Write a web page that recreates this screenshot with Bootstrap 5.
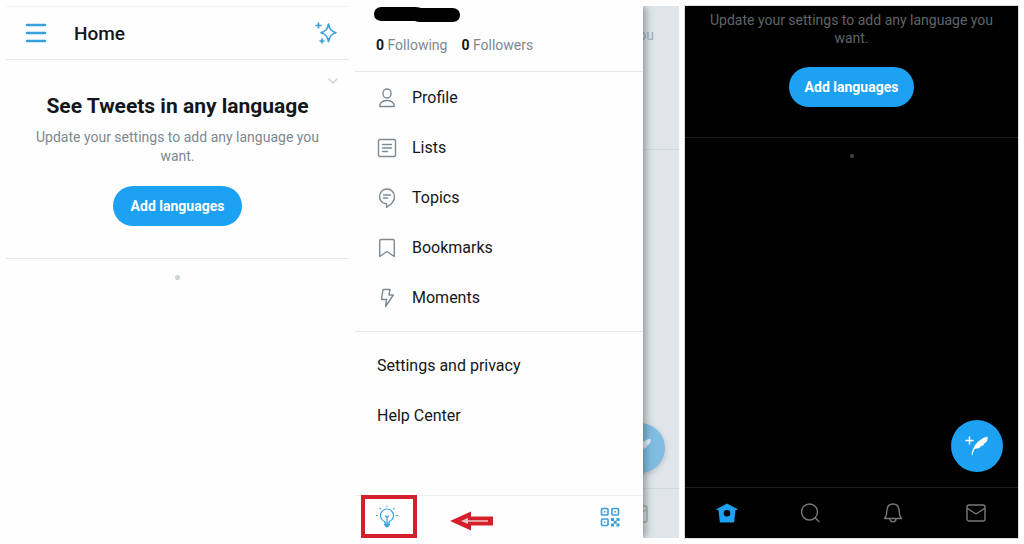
<!DOCTYPE html>
<html lang="en">
<head>
<meta charset="utf-8">
<meta name="viewport" content="width=device-width, initial-scale=1">
<title>Dark mode steps</title>
<link href="https://cdn.jsdelivr.net/npm/bootstrap@5.3.0/dist/css/bootstrap.min.css" rel="stylesheet">
<style>
  :root { --brand: #1da1f2; --ink: #14171a; --muted: #7b8992; --rule: #e3e8ea; }
  body { font-family: Roboto, "Liberation Sans", sans-serif; color: var(--ink); background: #fefefe; }
  svg { display: block; fill: none; stroke: currentColor; stroke-linecap: round; stroke-linejoin: round; }
  .screens { display: grid; grid-template-columns: 343fr 324fr 333fr; gap: 6px; padding: 6px; min-height: 100vh; }
  .icon-btn { padding: 0; border: 0; background: none; color: #379fd9; }
  .rule-b { border-bottom: 1px solid var(--rule); }

  .home-bar { height: 54px; padding: 0 12px 0 19px; border-top: 1px solid #f3f4f5; }
  .home-title { font-size: 19px; line-height: 26px; font-weight: 500; margin: 2px 0 0 27px; }
  .promo { padding: 13px 8px 32px; }
  .promo-close { height: 16px; padding-right: 2px; color: #ccd2d5; }
  .promo-close button { color: inherit; }
  .promo-title { font-size: 21px; line-height: 26px; font-weight: 700; margin: 4px 0 9px; }
  .promo-text { font-size: 14px; line-height: 19px; color: var(--muted); margin: 0 16px 20px; }
  .btn-pill { height: 40px; padding: 0 18px; border: 0; border-radius: 20px; background: var(--brand); color: #fff; font-size: 14px; line-height: 20px; font-weight: 700; }
  .btn-pill:hover { background: #1a91da; color: #fff; }
  .dot { width: 5px; height: 5px; border-radius: 50%; background: #ccd3d7; margin: 16px auto 0; }

  .drawer { flex: 0 0 89%; background: #fefefe; z-index: 1; box-shadow: 2px 0 8px rgba(40,55,65,.5); clip-path: inset(0 -12px 0 0); }
  .drawer-head { height: 66px; padding: 1px 20px 0 19px; }
  .stats { font-size: 14px; line-height: 18px; gap: 14px; margin: 13px 0 0 2px; }
  .stats a { color: var(--muted); text-decoration: none; }
  .stats b { color: var(--ink); }
  .menu-link { height: 50px; padding-left: 22px; gap: 15px; font-size: 16px; line-height: 20px; color: var(--ink); text-decoration: none; }
  .menu-link svg { color: #7b8a94; }
  .menu-main { padding: 1px 0 8px; }
  .menu-more { padding-top: 9px; }
  .drawer-foot { height: 43px; padding: 0 23px 0 6px; box-shadow: inset 0 1px #eceff0; }
  .marked { width: 56px; padding-right: 4px; border: 4px solid #d5202b; }
  .arrow-note { margin: 8px 0 0 33px; }
  .dimmed { background: #dfe5e8; color: #a6afb4; }
  .dimmed-text { height: 144px; padding-top: 19px; border-bottom: 1px solid #d1d9dd; font-size: 14px; line-height: 20px; }
  .dimmed-text span { margin-left: -5px; }
  .dimmed-fab { width: 50px; height: 50px; margin: 0 0 15px -28px; border-radius: 50%; background: #81bde3; box-shadow: 0 2px 5px rgba(60,80,90,.25); color: #e6f0f6; }
  .dimmed-foot { height: 50px; border-top: 1px solid #d1d9dd; }
  .dimmed-foot svg { margin-left: -15px; }

  .dark { background: #000; box-shadow: 0 0 0 1px #d9dddd; }
  .dark .promo { padding: 5px 8px 30px; border-bottom: 1px solid #1c1f21; }
  .dark .promo-text { color: #5f6568; line-height: 18px; margin: 0 8px 20px; }
  .dark .btn-pill { height: 40px; padding: 0 16px; }
  .dark .dot { background: #3d4143; width: 4px; height: 4px; }
  .fab { width: 52px; height: 52px; padding: 0; margin: 0 15px 15px auto; border: 0; border-radius: 50%; background: var(--brand); color: #fff; }
  .tabs { height: 51px; border-top: 1px solid #1c1f21; }
  .tabs a { flex: 1 1 0; color: #76797b; }
  .tabs a.active { color: var(--brand); }
</style>
</head>
<body>
<svg width="0" height="0" class="position-absolute" aria-hidden="true">
  <symbol id="mail" viewBox="0 0 20 20"><rect x="1" y="2" width="18" height="16" rx="2"/><path d="M1.500 5.500 10 11l8.500-5.500"/></symbol>
  <symbol id="feather" viewBox="0 0 24 22"><path d="M4.500 2v7M1 5.500h7" stroke-width="1.500"/><path d="M6.500 20C7.500 13 11.500 4.500 22.500 1.500c.4 2.500-.2 4.500-1.500 5.800-.8.8-1.700 1.200-3 1.400l1.300.6c-1.500 1.700-3 2.300-5 2.500l1.200.8c-1.800 1-3.700.9-5.700 1.400C8.500 16 8 18 7.500 20z" fill="currentColor" stroke="none"/></symbol>
</svg>

<main class="screens">
  <section class="d-flex flex-column" aria-label="Home timeline">
    <header class="home-bar rule-b d-flex align-items-center">
      <button class="icon-btn" type="button" aria-label="Open menu">
        <svg width="22" height="20" viewBox="0 0 22 20" stroke-width="2.500"><path d="M2 2h18M2 10h18M2 18h18"/></svg>
      </button>
      <h1 class="home-title">Home</h1>
      <button class="icon-btn ms-auto" type="button" aria-label="Timeline options">
        <svg width="22" height="22" viewBox="0 0 22 22" stroke-width="1.600"><path d="M13.500 2c.9 5 2.500 7.400 7.500 8.700-5 1.300-6.600 3.700-7.500 8.800-.9-5.100-2.500-7.500-7.500-8.800 5-1.300 6.600-3.700 7.500-8.700zM3.500 1v5M1 3.500h5M7 17v4M5 19h4"/></svg>
      </button>
    </header>
    <div class="promo rule-b text-center">
      <div class="promo-close d-flex justify-content-end align-items-center">
        <button class="icon-btn" type="button" aria-label="Dismiss"><svg width="12" height="8" viewBox="0 0 12 8" stroke-width="1.500"><path d="m2 2 4 4 4-4"/></svg></button>
      </div>
      <h2 class="promo-title">See Tweets in any language</h2>
      <p class="promo-text">Update your settings to add any language you want.</p>
      <button class="btn btn-pill" type="button">Add languages</button>
    </div>
    <div class="dot"></div>
  </section>

  <section class="d-flex" aria-label="Account menu">
    <div class="drawer d-flex flex-column">
      <header class="drawer-head rule-b">
        <svg width="86" height="16" viewBox="0 0 86 16" aria-hidden="true"><path d="M7 0H41Q44 0 47 1H79Q86 2 86 8T79 15H46Q43 15 41 14H7Q0 13 0 7T7 0z" fill="#000" stroke="none"/></svg>
        <div class="stats d-flex"><a href="#"><b>0</b> Following</a><a href="#"><b>0</b> Followers</a></div>
      </header>
      <nav class="menu-main rule-b">
        <a class="menu-link d-flex align-items-center" href="#"><svg width="20" height="20" viewBox="0 0 20 20" stroke-width="1.400"><rect x="6" y="1" width="8" height="9" rx="4"/><path d="M3.500 18.500c-.6 0-1-.4-.8-1C3.500 14.200 6.500 12.500 10 12.500s6.500 1.700 7.300 5c.2.600-.2 1-.8 1z"/></svg>Profile</a>
        <a class="menu-link d-flex align-items-center" href="#"><svg width="20" height="20" viewBox="0 0 20 20" stroke-width="1.400"><rect x="1.500" y="1.500" width="17" height="17" rx="1.500"/><path d="M5.500 6.500h9M5.500 10h9M5.500 13.500h5"/></svg>Lists</a>
        <a class="menu-link d-flex align-items-center" href="#"><svg width="20" height="20" viewBox="0 0 20 20" stroke-width="1.400"><path d="M9.500 19.300V15.800C5.300 15.600 2.500 12.400 2.500 8.500a7.500 7.500 0 0 1 15 0c0 4.500-3.800 8.500-8 10.800zM6.500 7h7M6.500 10h4"/></svg>Topics</a>
        <a class="menu-link d-flex align-items-center" href="#"><svg width="20" height="20" viewBox="0 0 20 20" stroke-width="1.400"><path d="M4 1.500h12c.8 0 1.300.5 1.300 1.300v15.700L10 13.500l-7.300 5V2.800C2.700 2 3.200 1.500 4 1.500z"/></svg>Bookmarks</a>
        <a class="menu-link d-flex align-items-center" href="#"><svg width="20" height="20" viewBox="0 0 20 20" stroke-width="1.400"><path d="M6 1.500h7L12 7h4.300L8.500 18.500l1-7H4.500z"/></svg>Moments</a>
      </nav>
      <nav class="menu-more">
        <a class="menu-link d-flex align-items-center" href="#">Settings and privacy</a>
        <a class="menu-link d-flex align-items-center" href="#">Help Center</a>
      </nav>
      <footer class="drawer-foot d-flex align-items-center mt-auto">
        <button class="icon-btn marked align-self-stretch d-flex align-items-center justify-content-center" type="button" aria-label="Display mode">
          <svg width="24" height="24" viewBox="0 0 24 24" stroke-width="1.200"><path d="M9.800 18v-1.400a6.500 6.500 0 1 1 4.400 0V18zM12 17v-4.500l-1.700-1.700M12 12.500l1.700-1.700M12 1v.3M4.800 3.300l.6.600M19.200 3.300l-.6.600M1.500 10.500h.8M21.700 10.500h.8"/><path d="M9.800 19.500h4.400M11 21.300h2" stroke-width="1.900"/></svg>
        </button>
        <svg class="arrow-note" width="43" height="20" viewBox="0 0 43 20" role="img" aria-label="Arrow pointing to the display mode button"><path d="M0 10 21 .5v5h22v9H21v5z" fill="#d5202b" stroke="none"/><path d="m11 10 7-3v2.200h20v1.600H18V13z" fill="#ecc9c9" stroke="none"/></svg>
        <button class="icon-btn ms-auto" type="button" aria-label="QR code">
          <svg width="20" height="20" viewBox="0 0 20 20" stroke-width="1.600"><rect x="1.500" y="1.500" width="6.500" height="6.500" rx="1"/><rect x="12" y="1.500" width="6.500" height="6.500" rx="1"/><rect x="1.500" y="12" width="6.500" height="6.500" rx="1"/><path d="M4 4h1.500v1.500H4zM14.500 4H16v1.500h-1.500zM4 14.500h1.500V16H4zM11 11h3v3h-3zM16.500 11h3v3h-3zM13.700 13.700h3v3h-3zM11 16.500h3v3h-3zM16.500 16.500h3v3h-3z" fill="currentColor" stroke="none"/></svg>
        </button>
      </footer>
    </div>
    <div class="dimmed flex-fill d-flex flex-column overflow-hidden" aria-hidden="true">
      <div class="dimmed-text"><span>ou</span></div>
      <div class="dimmed-fab mt-auto d-flex align-items-center justify-content-center"><svg width="24" height="22"><use href="#feather"/></svg></div>
      <div class="dimmed-foot d-flex align-items-center"><svg width="20" height="20" stroke-width="1.400"><use href="#mail"/></svg></div>
    </div>
  </section>

  <section class="dark d-flex flex-column" aria-label="Home timeline in dark mode">
    <div class="promo text-center">
      <p class="promo-text">Update your settings to add any language you want.</p>
      <button class="btn btn-pill" type="button">Add languages</button>
    </div>
    <div class="dot"></div>
    <button class="fab mt-auto d-flex align-items-center justify-content-center" type="button" aria-label="Compose Tweet"><svg width="24" height="22"><use href="#feather"/></svg></button>
    <nav class="tabs d-flex">
      <a class="active d-flex align-items-center justify-content-center" href="#" aria-label="Home"><svg width="22" height="20" viewBox="0 0 22 20"><path fill="currentColor" stroke="none" fill-rule="evenodd" d="M11 .5 21.300 6c.5.300.2 1-.5 1h-1.300l-1.200 11c-.1 1-.7 1.500-1.600 1.500H5.300c-.9 0-1.500-.5-1.600-1.500L2.500 7H1.200C.5 7 .2 6.300.7 6zM11 7a3.300 3.300 0 1 0 0 6.600A3.300 3.300 0 0 0 11 7z"/></svg></a>
      <a class="d-flex align-items-center justify-content-center" href="#" aria-label="Search"><svg width="20" height="20" viewBox="0 0 20 20" stroke-width="1.400"><circle cx="9.500" cy="9" r="8"/><path d="m15.300 15 3.500 3.500"/></svg></a>
      <a class="d-flex align-items-center justify-content-center" href="#" aria-label="Notifications"><svg width="20" height="20" viewBox="0 0 20 20" stroke-width="1.400"><path d="M1.500 15.500c1.300-1.300 1.800-2.500 2-4.500l.5-4.500C4.400 3.200 6.800 1 10 1s5.600 2.200 6 5.500l.5 4.500c.2 2 .7 3.200 2 4.500zM7 15.500c0 4.500 6 4.500 6 0"/></svg></a>
      <a class="d-flex align-items-center justify-content-center" href="#" aria-label="Messages"><svg width="20" height="20" stroke-width="1.400"><use href="#mail"/></svg></a>
    </nav>
  </section>
</main>
<script src="https://cdn.jsdelivr.net/npm/bootstrap@5.3.0/dist/js/bootstrap.bundle.min.js"></script>
</body>
</html>
